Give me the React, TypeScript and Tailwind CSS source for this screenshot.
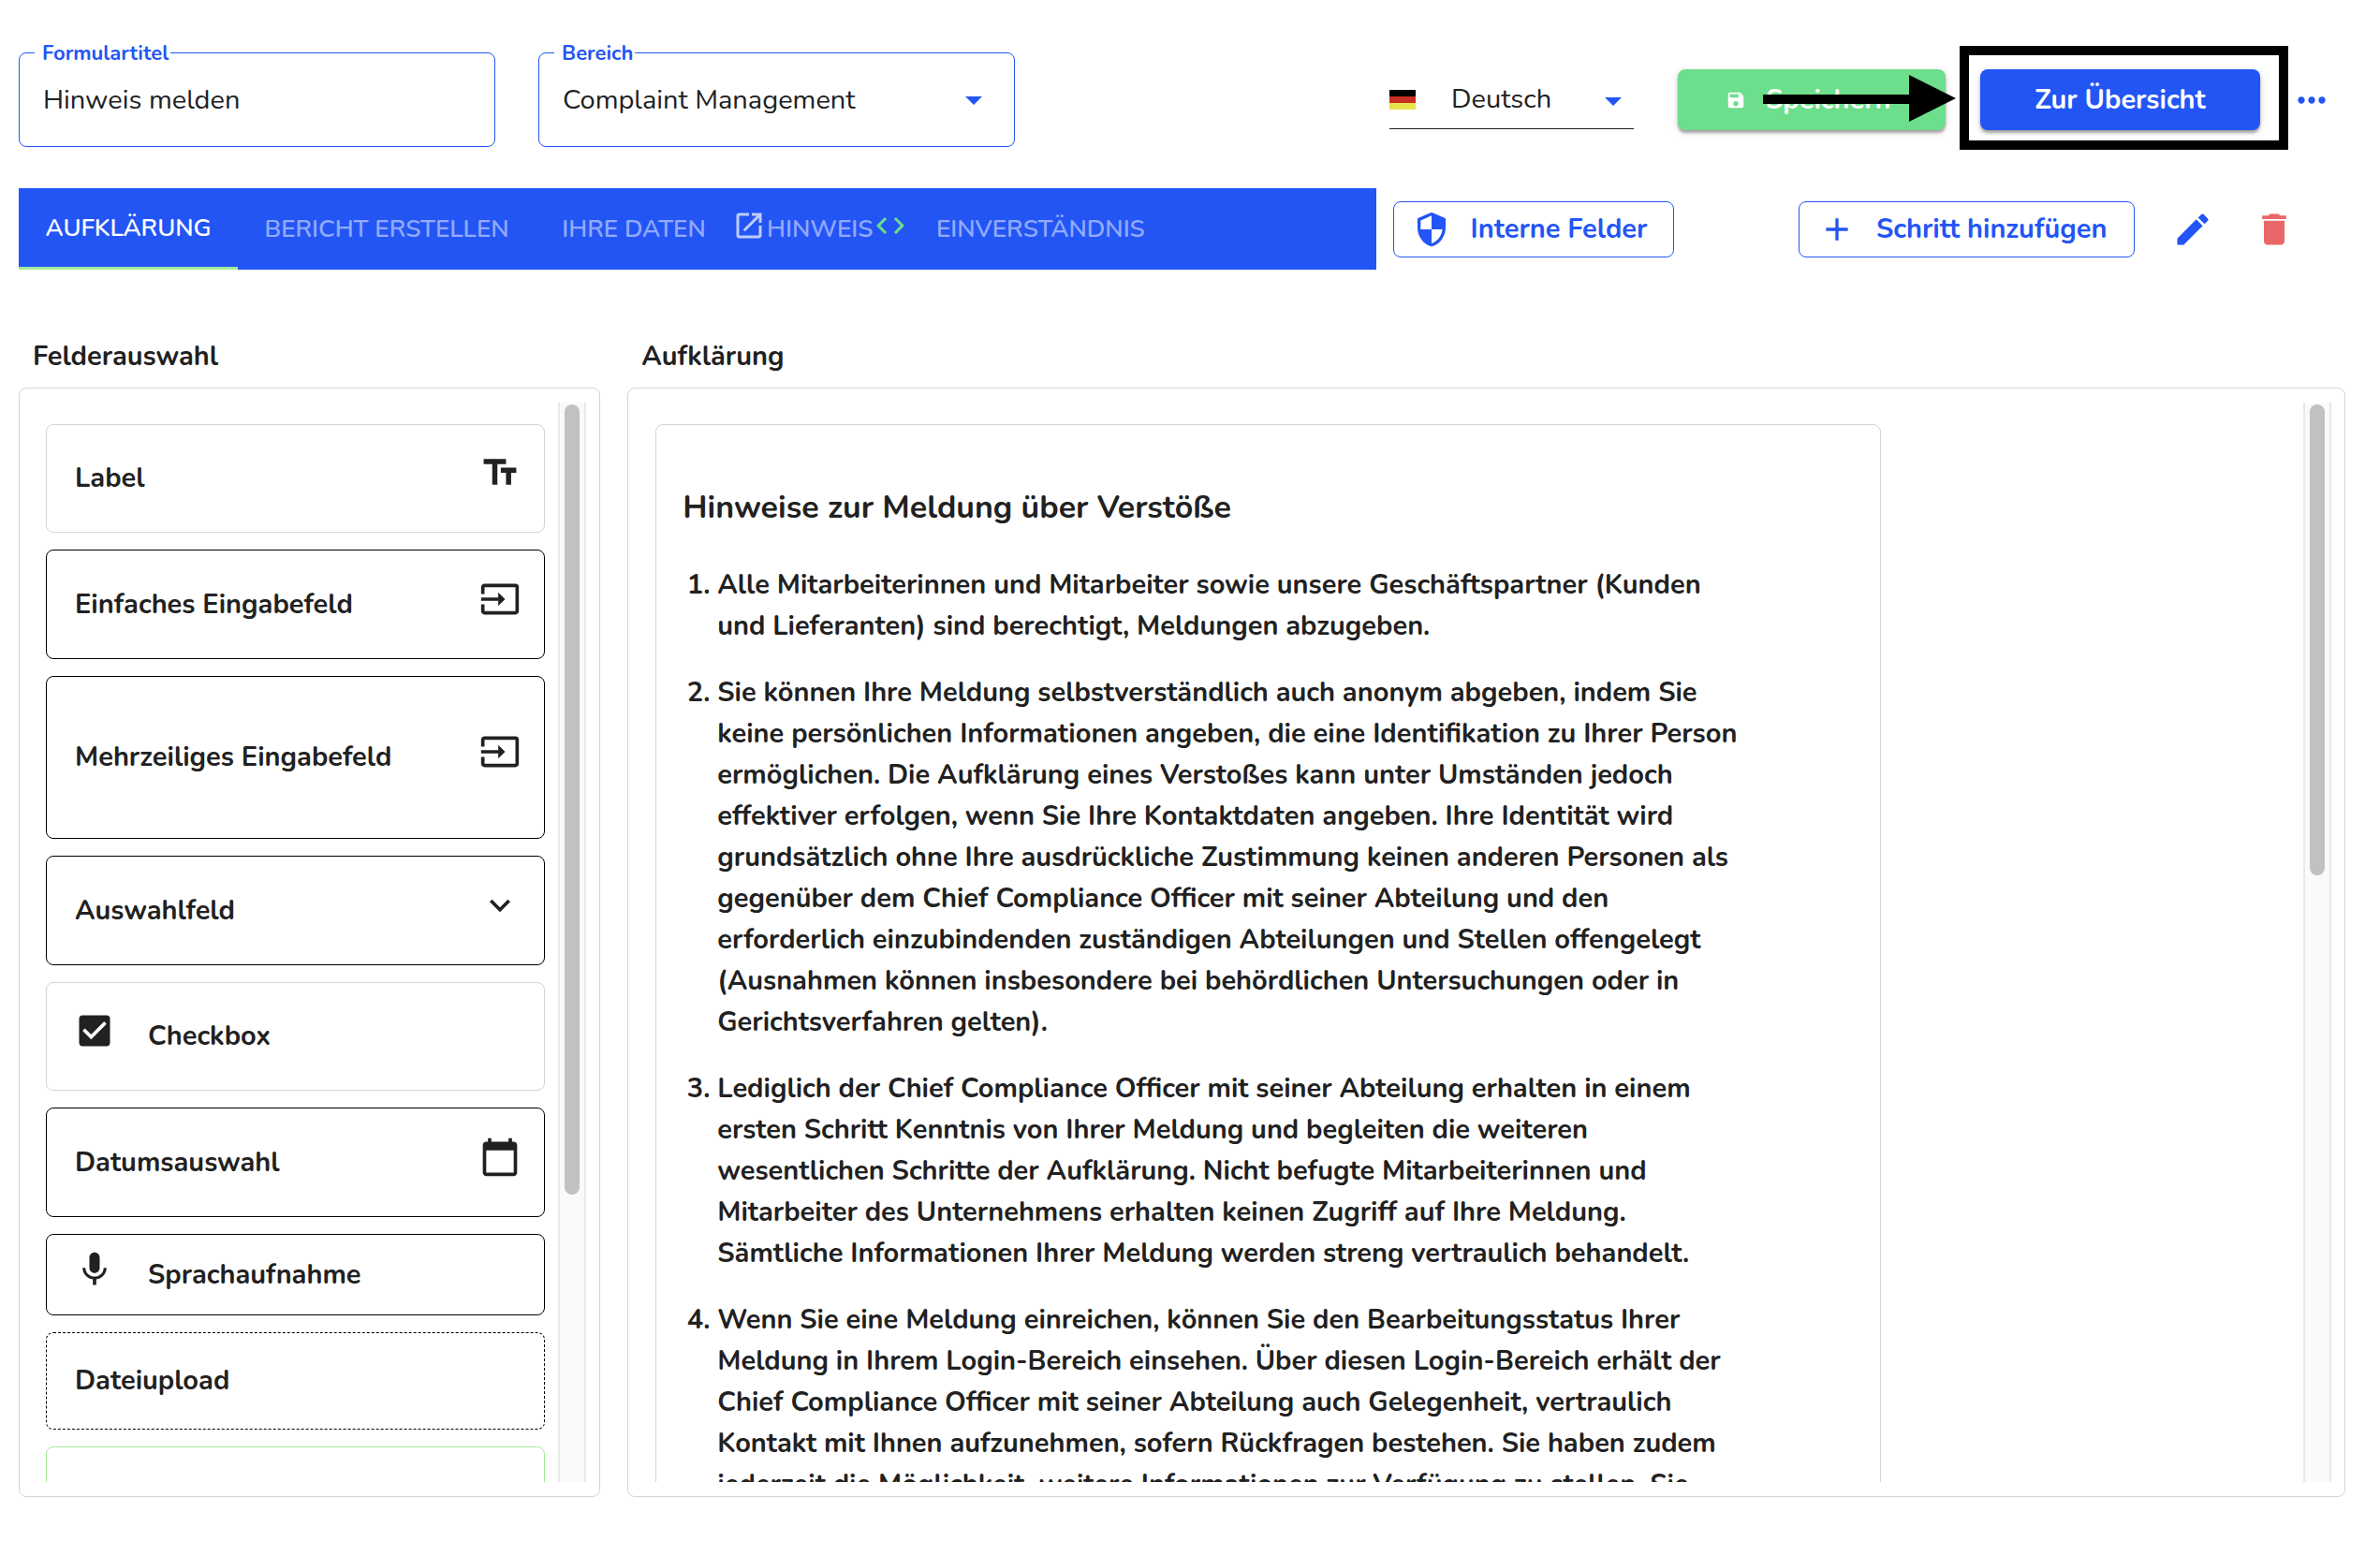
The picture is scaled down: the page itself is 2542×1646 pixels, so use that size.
import type { ReactNode } from 'react'
import { useState } from 'react'
import clsx from 'clsx'
import {
  MdAdd,
  MdCalendarToday,
  MdCheckBox,
  MdCode,
  MdDelete,
  MdEdit,
  MdExpandMore,
  MdInput,
  MdMic,
  MdMoreHoriz,
  MdOpenInNew,
  MdSave,
  MdSecurity,
  MdTextFields,
} from 'react-icons/md'

interface FieldCardProps {
  label: string
  className: string
  leading?: ReactNode
  trailing?: ReactNode
}

const hints = [
  'Alle Mitarbeiterinnen und Mitarbeiter sowie unsere Geschäftspartner (Kunden und Lieferanten) sind berechtigt, Meldungen abzugeben.',
  'Sie können Ihre Meldung selbstverständlich auch anonym abgeben, indem Sie keine persönlichen Informationen angeben, die eine Identifikation zu Ihrer Person ermöglichen. Die Aufklärung eines Verstoßes kann unter Umständen jedoch effektiver erfolgen, wenn Sie Ihre Kontaktdaten angeben. Ihre Identität wird grundsätzlich ohne Ihre ausdrückliche Zustimmung keinen anderen Personen als gegenüber dem Chief Compliance Officer mit seiner Abteilung und den erforderlich einzubindenden zuständigen Abteilungen und Stellen offengelegt (Ausnahmen können insbesondere bei behördlichen Untersuchungen oder in Gerichtsverfahren gelten).',
  'Lediglich der Chief Compliance Officer mit seiner Abteilung erhalten in einem ersten Schritt Kenntnis von Ihrer Meldung und begleiten die weiteren wesentlichen Schritte der Aufklärung. Nicht befugte Mitarbeiterinnen und Mitarbeiter des Unternehmens erhalten keinen Zugriff auf Ihre Meldung. Sämtliche Informationen Ihrer Meldung werden streng vertraulich behandelt.',
  'Wenn Sie eine Meldung einreichen, können Sie den Bearbeitungsstatus Ihrer Meldung in Ihrem Login-Bereich einsehen. Über diesen Login-Bereich erhält der Chief Compliance Officer mit seiner Abteilung auch Gelegenheit, vertraulich Kontakt mit Ihnen aufzunehmen, sofern Rückfragen bestehen. Sie haben zudem jederzeit die Möglichkeit, weitere Informationen zur Verfügung zu stellen. Sie',
]

function Caret({ className }: { className?: string }) {
  return (
    <svg viewBox="0 0 18 9" className={clsx('pointer-events-none h-[9px] w-[18px] fill-[#2355f5]', className)}>
      <path d="M0 0h18L9 9z" />
    </svg>
  )
}

function OutlinedField({ id, label, children }: { id: string; label: string; children: ReactNode }) {
  return (
    <div className="relative h-[101px] w-[509px] rounded-lg border border-[#2355f5]">
      <label
        htmlFor={id}
        className="absolute -top-4 left-4 bg-white pr-0.5 pl-2 text-[22px] leading-8 font-bold text-[#2355f5]"
      >
        {label}
      </label>
      {children}
    </div>
  )
}

function FieldCard({ label, className, leading, trailing }: FieldCardProps) {
  return (
    <li draggable className={clsx('flex shrink-0 items-center rounded-lg border px-[30px]', className)}>
      {leading && <span className="mr-[35px] -ml-px pb-3">{leading}</span>}
      <span className="flex-1">{label}</span>
      {trailing && <span className="-mr-[5px] pb-3">{trailing}</span>}
    </li>
  )
}

function ScrollPanel({ thumb, children }: { thumb: string; children: ReactNode }) {
  return (
    <div className="flex min-h-0 flex-1 rounded-lg border border-[#d4d4d4] py-[15px] pr-3.5">
      <div className="min-w-0 flex-1 overflow-x-hidden overflow-y-auto pt-[23px] pl-7 [scrollbar-width:none]">
        {children}
      </div>
      <div className="w-[30px] shrink-0 border-x-2 border-[#e8e8e8] bg-[#fafafa] px-[5px] py-0.5">
        <div className={clsx('rounded-full bg-[#c1c1c1]', thumb)} />
      </div>
    </div>
  )
}

export default function App() {
  const [title, setTitle] = useState('Hinweis melden')
  const [checked, setChecked] = useState(true)

  const tab = 'flex h-full items-center'
  const inactive = 'text-white/50'

  return (
    <div className="flex h-screen min-h-[1000px] flex-col overflow-hidden bg-white pt-14 pr-[37px] pb-[47px] pl-5 font-['Nunito','Lato',sans-serif] text-[29px] text-[#212121]">
      {/* Kopfzeile */}
      <header className="flex items-center">
        <OutlinedField id="title" label="Formulartitel">
          <input
            id="title"
            value={title}
            onChange={(e) => setTitle(e.target.value)}
            className="h-full w-full bg-transparent px-[25px] outline-none"
          />
        </OutlinedField>
        <div className="ml-[46px]">
          <OutlinedField id="area" label="Bereich">
            <select id="area" className="h-full w-full appearance-none bg-transparent px-[25px] outline-none">
              <option>Complaint Management</option>
            </select>
            <Caret className="absolute top-[46px] right-[34px]" />
          </OutlinedField>
        </div>

        <div className="ml-auto flex items-center">
          <div className="relative flex h-[62px] w-[261px] items-center border-b border-[#212121]">
            <svg viewBox="0 0 28 21" className="h-[21px] w-7 shrink-0">
              <path fill="#000" d="M0 0h28v7H0z" />
              <path fill="#c92e22" d="M0 7h28v7H0z" />
              <path fill="#e8e34b" d="M0 14h28v7H0z" />
            </svg>
            <select
              aria-label="Sprache"
              className="h-full w-full appearance-none bg-transparent pl-[38px] outline-none"
            >
              <option>Deutsch</option>
            </select>
            <Caret className="absolute top-[28px] right-[13px]" />
          </div>

          <div className="relative ml-[47px]">
            <button className="flex h-[65px] w-[286px] items-center rounded-lg bg-[#6dde8b] pl-[51px] font-bold text-white shadow-[0_3px_3px_rgba(0,0,0,0.3),0_2px_10px_rgba(0,0,0,0.12)]">
              <MdSave className="mr-[21px] size-[22px]" />
              Speichern
            </button>
            <svg viewBox="0 0 206 50" className="pointer-events-none absolute top-1.5 left-[91px] z-10 h-[50px] w-[206px]">
              <path d="M0 21h156V0l50 25-50 25V31H0z" />
            </svg>
          </div>

          <div className="relative ml-[37px]">
            <div className="pointer-events-none absolute -top-[25px] -right-[30px] -bottom-[21px] -left-[22px] border-[10px] border-black" />
            <button className="h-[65px] w-[299px] rounded-lg bg-[#2355f5] font-bold text-white shadow-[0_3px_3px_rgba(0,0,0,0.3),0_2px_10px_rgba(0,0,0,0.12)]">
              Zur Übersicht
            </button>
          </div>

          <button aria-label="Mehr" className="mr-[14px] ml-[33px] text-[#2355f5]">
            <MdMoreHoriz className="size-11" />
          </button>
        </div>
      </header>

      {/* Schritte */}
      <div className="mt-11 flex items-center text-[#2355f5]">
        <nav className="flex h-[87px] w-7/12 items-center bg-[#2355f5] text-[26px] font-semibold">
          <button className={clsx(tab, 'w-[234px] justify-center border-b-[3px] border-[#a3eb98] text-white')}>
            AUFKLÄRUNG
          </button>
          <button className={clsx(tab, inactive, 'w-[318px] justify-center')}>BERICHT ERSTELLEN</button>
          <button className={clsx(tab, inactive, 'w-[210px] justify-center')}>IHRE DATEN</button>
          <button className={clsx(tab, inactive, 'w-[188px]')}>
            <MdOpenInNew className="mr-px mb-2 size-9 text-white/70" />
            <span className="mr-px">HINWEIS</span>
            <MdCode className="mb-2 size-9 text-[#6dde8b]" />
          </button>
          <button className={clsx(tab, inactive, 'pl-[30px]')}>EINVERSTÄNDNIS</button>
        </nav>
        <button className="ml-[18px] flex h-[60px] w-[300px] items-center rounded-lg border border-[#2355f5] pl-5 font-bold">
          <MdSecurity className="mr-[22px] size-10" />
          Interne Felder
        </button>
        <div className="ml-auto flex items-center">
          <button className="flex h-[60px] w-[359px] items-center rounded-lg border border-[#2355f5] pl-5 font-bold">
            <MdAdd className="mr-[22px] size-10" />
            Schritt hinzufügen
          </button>
          <button aria-label="Bearbeiten" className="ml-10">
            <MdEdit className="size-11" />
          </button>
          <button aria-label="Löschen" className="mr-[54px] ml-[43px] text-[#e96767]">
            <MdDelete className="size-11" />
          </button>
        </div>
      </div>

      <main className="mt-[71px] flex min-h-0 flex-1 gap-[29px] font-bold">
        <section className="flex w-1/4 flex-col">
          <h2 className="mb-[11px] pl-[15px] leading-[44px]">Felderauswahl</h2>
          <ScrollPanel thumb="h-[844px]">
            <ul className="flex flex-col gap-[18px] pr-3.5">
              <FieldCard label="Label" className="h-[116px] border-[#d4d4d4]" trailing={<MdTextFields className="size-11" />} />
              <FieldCard label="Einfaches Eingabefeld" className="h-[117px] border-black" trailing={<MdInput className="size-11" />} />
              <FieldCard label="Mehrzeiliges Eingabefeld" className="h-[174px] border-black" trailing={<MdInput className="size-11" />} />
              <FieldCard label="Auswahlfeld" className="h-[117px] border-black" trailing={<MdExpandMore className="size-11" />} />
              <FieldCard
                label="Checkbox"
                className="h-[116px] border-[#d4d4d4]"
                leading={
                  <span className="grid">
                    <input
                      type="checkbox"
                      aria-label="Checkbox"
                      checked={checked}
                      onChange={() => setChecked(!checked)}
                      className="col-start-1 row-start-1 size-11 appearance-none"
                    />
                    <MdCheckBox className="pointer-events-none col-start-1 row-start-1 size-11" />
                  </span>
                }
              />
              <FieldCard label="Datumsauswahl" className="h-[117px] border-black" trailing={<MdCalendarToday className="size-11" />} />
              <FieldCard label="Sprachaufnahme" className="h-[87px] border-black" leading={<MdMic className="size-11" />} />
              <FieldCard label="Dateiupload" className="h-[104px] border-dashed border-black" />
              <FieldCard label="" className="h-[116px] border-[#a3eb98]" />
            </ul>
          </ScrollPanel>
        </section>

        <section className="flex min-w-0 flex-1 flex-col">
          <h2 className="mb-[11px] pl-[15px] leading-[44px]">Aufklärung</h2>
          <ScrollPanel thumb="h-[503px]">
            <article className="ml-px max-w-[1309px] rounded-lg border border-[#d4d4d4] px-7 pt-[61px] pb-10">
              <h3 className="text-[34px] leading-[54px]">Hinweise zur Meldung über Verstöße</h3>
              <ol className="mt-[34px] flex w-[1137px] list-decimal flex-col gap-[27px] pl-[37px] leading-[44px]">
                {hints.map((hint) => (
                  <li key={hint}>{hint}</li>
                ))}
              </ol>
            </article>
          </ScrollPanel>
        </section>
      </main>
    </div>
  )
}
